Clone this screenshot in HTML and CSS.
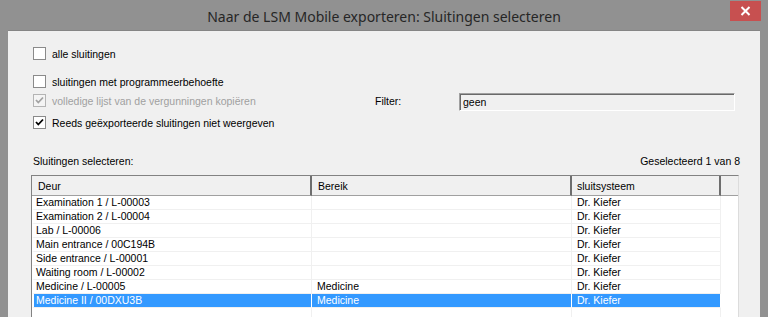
FILE: index.html
```html
<!DOCTYPE html>
<html lang="nl">
<head>
    <meta charset="UTF-8">
    <meta name="viewport" content="width=device-width, initial-scale=1.0">
    <title>Naar de LSM Mobile exporteren</title>
    <link rel="stylesheet" href="styles.css">
</head>
<body>
    <div class="window">
        <div class="titlebar">
            <span class="title">Naar de LSM Mobile exporteren: Sluitingen selecteren</span>
            <button class="close" title="Sluiten">
                <svg width="11" height="10" viewBox="0 0 11 10"><path d="M1.5 1 L9.5 9 M9.5 1 L1.5 9" stroke="#fff" stroke-width="2"/></svg>
            </button>
        </div>
        <div class="client">
            <div class="options">
                <label class="opt first">
                    <span class="box"></span>
                    <span>alle sluitingen</span>
                </label>
                <label class="opt second">
                    <span class="box"></span>
                    <span>sluitingen met programmeerbehoefte</span>
                </label>
                <div class="opt third">
                    <label class="opt-main disabled">
                        <span class="box">
                            <svg width="11" height="11" viewBox="0 0 11 11"><polyline points="2,5 4.3,7.5 9,2.5" fill="none" stroke="#a2a2a2" stroke-width="1.8"/></svg>
                        </span>
                        <span>volledige lijst van de vergunningen kopiëren</span>
                    </label>
                    <span class="filter-label">Filter:</span>
                    <div class="filter-input">geen</div>
                </div>
                <label class="opt fourth">
                    <span class="box">
                        <svg width="11" height="11" viewBox="0 0 11 11"><polyline points="2,5 4.3,7.5 9,2.5" fill="none" stroke="#000" stroke-width="1.8"/></svg>
                    </span>
                    <span>Reeds geëxporteerde sluitingen niet weergeven</span>
                </label>
            </div>

            <div class="list-head">
                <span>Sluitingen selecteren:</span>
                <span>Geselecteerd 1 van 8</span>
            </div>

            <div class="listbox">
                <table>
                    <thead>
                        <tr>
                            <th class="col-deur">Deur</th>
                            <th class="col-bereik">Bereik</th>
                            <th class="col-systeem">sluitsysteem</th>
                            <th class="col-rest"></th>
                        </tr>
                    </thead>
                    <tbody>
                        <tr><td>Examination 1 / L-00003</td><td></td><td>Dr. Kiefer</td><td class="rest"></td></tr>
                        <tr><td>Examination 2 / L-00004</td><td></td><td>Dr. Kiefer</td><td class="rest"></td></tr>
                        <tr><td>Lab / L-00006</td><td></td><td>Dr. Kiefer</td><td class="rest"></td></tr>
                        <tr><td>Main entrance / 00C194B</td><td></td><td>Dr. Kiefer</td><td class="rest"></td></tr>
                        <tr><td>Side entrance / L-00001</td><td></td><td>Dr. Kiefer</td><td class="rest"></td></tr>
                        <tr><td>Waiting room / L-00002</td><td></td><td>Dr. Kiefer</td><td class="rest"></td></tr>
                        <tr><td>Medicine / L-00005</td><td>Medicine</td><td>Dr. Kiefer</td><td class="rest"></td></tr>
                        <tr class="selected"><td>Medicine II / 00DXU3B</td><td>Medicine</td><td>Dr. Kiefer</td><td class="rest"></td></tr>
                        <tr><td></td><td></td><td></td><td class="rest"></td></tr>
                    </tbody>
                </table>
            </div>
        </div>
    </div>
</body>
</html>
```

FILE: styles.css
```css
body {
    margin: 0;
    background-color: #919191;
    font-family: 'Liberation Sans', Arial, sans-serif;
    font-size: 10.5px;
    color: #000;
    overflow: hidden;
}
.window {
    width: 768px;
    height: 317px;
    display: flex;
    flex-direction: column;
    background-color: #919191;
    overflow: hidden;
}
.titlebar {
    position: relative;
    flex: none;
    height: 30px;
    display: flex;
    justify-content: center;
    align-items: center;
}
.title {
    font-family: 'Noto Sans', 'Open Sans', sans-serif;
    font-size: 14px;
    color: #262626;
    padding-top: 2px;
}
.close {
    position: absolute;
    top: 1px;
    right: 7px;
    width: 31px;
    height: 20px;
    border: none;
    padding: 0;
    background-color: #c75050;
    display: flex;
    justify-content: center;
    align-items: center;
}
.client {
    flex: none;
    height: 300px;
    margin: 0 8px;
    background-color: #f0f0f0;
    border-top: 1px solid #858585;
    padding: 15px 20px 0 23px;
}
.options {
    padding-left: 2px;
}
.opt, .opt-main {
    display: flex;
    align-items: center;
    height: 15px;
}
.second {
    margin-top: 13px;
}
.third {
    margin-top: 4px;
}
.fourth {
    margin-top: 7px;
}
.box {
    width: 11px;
    height: 11px;
    border: 1px solid #8a8a8a;
    background-color: #fff;
    margin-right: 6px;
    display: flex;
    justify-content: center;
    align-items: center;
}
.opt-main {
    width: 342px;
}
.disabled {
    color: #a0a0a0;
}
.disabled .box {
    background-color: #f4f4f4;
    border-color: #b4b4b4;
}
.filter-label {
    width: 84px;
}
.filter-input {
    width: 271px;
    height: 16px;
    line-height: 16px;
    padding-left: 3px;
    margin-top: 2px;
    border: 1px solid;
    border-color: #a0a0a0 #ffffff #ffffff #a0a0a0;
    box-shadow: inset 1px 1px 0 #696969;
    background-color: #f0f0f0;
}
.list-head {
    display: flex;
    justify-content: space-between;
    align-items: center;
    height: 15px;
    margin-top: 23px;
    padding-left: 2px;
}
.listbox {
    width: 706px;
    height: 200px;
    margin-top: 7px;
    border: 1px solid #828282;
    border-right-color: #dcdcdc;
    background-color: #fff;
}
table {
    border-collapse: separate;
    border-spacing: 0;
    table-layout: fixed;
    width: 706px;
}
th {
    height: 19px;
    padding: 0 0 0 6px;
    text-align: left;
    font-weight: normal;
    background-color: #f0f0f0;
    border-bottom: 1px solid #a0a0a0;
    border-right: 2px solid #6e6e6e;
}
.col-deur {
    width: 272px;
}
.col-bereik {
    width: 252px;
}
.col-systeem {
    width: 142px;
    padding-left: 5px;
}
.col-rest {
    border-right: none;
    padding: 0;
}
td {
    height: 13px;
    padding: 0 0 0 5px;
    border-bottom: 1px solid #f0f0f0;
    border-right: 1px solid #f0f0f0;
    white-space: nowrap;
    line-height: 13px;
}
td:first-child {
    border-left: 2px solid #fff;
    padding-left: 2px;
}
td.rest {
    border-bottom: none;
    border-right: none;
    padding: 0;
}
tr.selected td {
    background-color: #3399ff;
    color: #fff;
    border-right-color: #fff;
}
tr.selected td.rest {
    background-color: #fff;
}
```
